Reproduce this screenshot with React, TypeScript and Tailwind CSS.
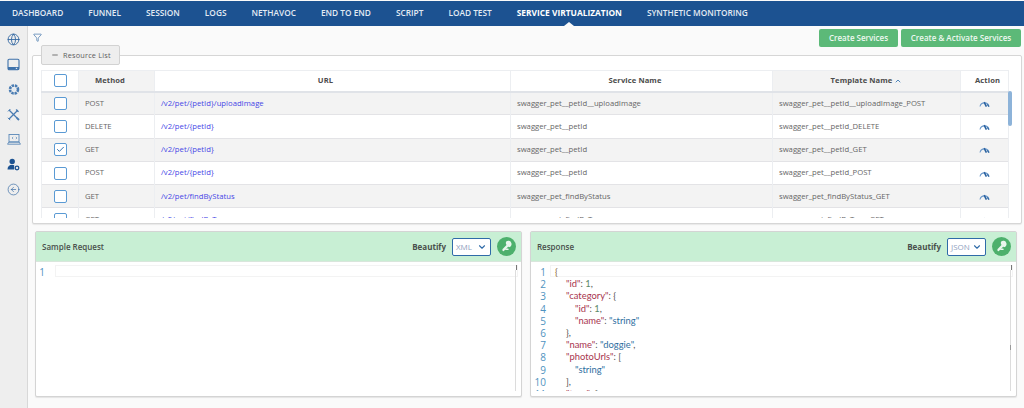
import React from "react";
import { ChevronDown, ChevronUp, Filter, Globe, CircleArrowLeft, Minus, Check } from "lucide-react";

const F = "[font-family:'Open_Sans',sans-serif]";
const nav = ["DASHBOARD", "FUNNEL", "SESSION", "LOGS", "NETHAVOC", "END TO END", "SCRIPT", "LOAD TEST"];
const rows = [
  ["POST", "/v2/pet/{petId}/uploadImage", "swagger_pet__petId__uploadImage", "swagger_pet__petId__uploadImage_POST"],
  ["DELETE", "/v2/pet/{petId}", "swagger_pet__petId", "swagger_pet__petId_DELETE"],
  ["GET", "/v2/pet/{petId}", "swagger_pet__petId", "swagger_pet__petId_GET"],
  ["POST", "/v2/pet/{petId}", "swagger_pet__petId", "swagger_pet__petId_POST"],
  ["GET", "/v2/pet/findByStatus", "swagger_pet_findByStatus", "swagger_pet_findByStatus_GET"],
  ["GET", "/v2/pet/findByTags", "swagger_pet_findByTags", "swagger_pet_findByTags_GET"],
];

function Box({ checked }: { checked?: boolean }) {
  return (
    <span className="flex h-[13px] w-[13px] items-center justify-center rounded-[2px] border border-[#5a9ad4] bg-white">
      {checked && <Check size={9} strokeWidth={2.6} className="text-[#2f6fae]" />}
    </span>
  );
}

function Gauge() {
  return (
    <svg width="11" height="7" viewBox="0 0 11 7" fill="none">
      <path d="M1 6.5A4.6 4.6 0 0 1 10 6.5" stroke="#6f9bcb" strokeWidth="1.1" />
      <path d="M5.2 2.2L7.4 6.6" stroke="#2a62a0" strokeWidth="1.6" />
      <path d="M8.2 4.4L10 6.6" stroke="#2a62a0" strokeWidth="1.2" />
    </svg>
  );
}

function Drive() {
  return (
    <svg width="13" height="13" viewBox="0 0 13 13" fill="none">
      <rect x="1" y="1.2" width="11" height="10.6" rx="1.2" stroke="#3f72aa" strokeWidth="1.1" />
      <rect x="1" y="9" width="11" height="2.8" fill="#3f72aa" />
      <rect x="8.8" y="9.8" width="1.4" height="1.1" fill="#e6eef6" />
    </svg>
  );
}

function Tools() {
  return (
    <svg width="13" height="13" viewBox="0 0 13 13" fill="none" stroke="#4a7cb2">
      <path d="M2 2L11 11" strokeWidth="1.2" />
      <path d="M11 2L2 11" strokeWidth="1.2" />
      <path d="M1 3.4L3.4 1" strokeWidth="1" />
      <path d="M9.4 1.2A2 2 0 0 0 11.8 3.6" strokeWidth="1" />
      <path d="M0.9 9.8L3.2 12.1" strokeWidth="1" />
      <path d="M9.8 9.8L12 12" strokeWidth="1.8" />
    </svg>
  );
}

function LaptopIcon() {
  return (
    <svg width="14" height="13" viewBox="0 0 14 13" fill="none" stroke="#5a88b8" strokeWidth="0.9">
      <rect x="2" y="1.5" width="10" height="7.5" />
      <path d="M0.5 11.2H13.5L12 9H2Z" />
      <path d="M5 5L6.2 4M5 5L6.2 6M8.8 4L10 5L8.8 6" strokeWidth="0.7" />
    </svg>
  );
}

function UserGear() {
  return (
    <svg width="13" height="13" viewBox="0 0 13 13" fill="#1c5291">
      <circle cx="5.2" cy="3.4" r="2.7" />
      <path d="M0.5 11.5C0.5 8.6 2.4 6.8 5.2 6.8C6 6.8 6.6 7 7.2 7.2V11.5Z" />
      <circle cx="10" cy="10" r="1.8" fill="none" stroke="#1c5291" strokeWidth="1.3" />
    </svg>
  );
}

function Aperture() {
  return (
    <svg width="12" height="13" viewBox="0 0 12 12">
      <circle cx="6" cy="6" r="4" fill="none" stroke="#4a7cb2" strokeWidth="2.6" strokeDasharray="2.4 0.8" />
      <circle cx="6" cy="6" r="1.6" fill="#dfe8f1" />
    </svg>
  );
}

function KeyIcon() {
  return (
    <svg width="13" height="13" viewBox="0 0 13 13" fill="#e9f6ed">
      <path d="M6.2 1.5A3.3 3.3 0 1 1 9 7.3L8.2 6.6L7 5.4L6.3 4.6A3.3 3.3 0 0 1 6.2 1.5Z" />
      <path d="M7 4.6L8.6 6.2L3.6 11.2L2.6 11L2.4 9.2Z" />
      <rect x="5.2" y="8.4" width="3.4" height="1.7" rx="0.7" />
    </svg>
  );
}

function Panel({ title, format, children }: { title: string; format: string; children?: React.ReactNode }) {
  return (
    <section className="flex h-[166px] w-[487px] flex-col rounded-[2px] border border-[#d4d4d4] bg-white shadow-[0_1px_1px_#e4e4e4]">
      <header className="flex h-[30px] shrink-0 items-center border-b border-[#d9e6dc] bg-[#c8efd4] pl-[6px] pr-[5px]">
        <span className="text-[8px] font-semibold text-[#4a4f4c]">{title}</span>
        <span className="ml-auto text-[8px] font-bold text-[#4a4f4c]">Beautify</span>
        <span className="ml-[6px] flex h-[18px] w-[39px] shrink-0 items-center justify-between rounded-[2px] border border-[#2f6ba8] bg-white px-[3px] text-[8px] text-[#8f9fc0]">
          {format}
          <ChevronDown size={10} strokeWidth={2.6} className="text-[#2f6ba8]" />
        </span>
        <span className="ml-[6px] flex h-[19px] w-[19px] shrink-0 items-center justify-center rounded-full bg-[#4db06c]">
          <KeyIcon />
        </span>
      </header>
      <div className="relative min-h-0 flex-1">
        <div className="absolute left-[19px] right-[3px] top-[3px] h-[12px] border border-[#f3f3f3]" />
        <div className="absolute bottom-[5px] right-[5px] top-[8px] w-px bg-[#dcdcdc]" />
        <div className="absolute right-[4px] top-[3px] h-[5px] w-px bg-[#777]" />
        {children && <div className="absolute right-[5px] top-[83px] h-[5px] w-px bg-[#999]" />}
        <div className="relative mb-[5px] flex h-[129px] overflow-hidden">
          <div className="w-[15px] shrink-0 pt-[4px] text-right text-[10px] leading-[12.2px] text-[#4f93c0]">
            {children ? [1, 2, 3, 4, 5, 6, 7, 8, 9, 10, 11].map((n) => <div key={n}>{n}</div>) : <div className="pr-[6px]">1</div>}
          </div>
          <div className="ml-[9px] min-w-0 flex-1 pt-[4px] text-[9.4px] leading-[12.2px] [font-family:Lato,sans-serif]">{children}</div>
        </div>
      </div>
    </section>
  );
}

const K = ({ c }: { c: string }) => <span className="text-[#a8344e]">{c}</span>;
const S = ({ c }: { c: string }) => <span className="text-[#2f6f9f]">{c}</span>;
const N = ({ c }: { c: string }) => <span className="text-[#5b8a6a]">{c}</span>;
const P = ({ c }: { c: string }) => <span className="text-[#555]">{c}</span>;

function Code() {
  return (
    <>
      <div><span className="text-[#8a6a3a]">{"{"}</span></div>
      <div className="pl-[11px]"><K c='"id"' /><P c=": " /><N c="1" /><P c="," /></div>
      <div className="pl-[11px]"><K c='"category"' /><P c=": {" /></div>
      <div className="pl-[20px]"><K c='"id"' /><P c=": " /><N c="1" /><P c="," /></div>
      <div className="pl-[20px]"><K c='"name"' /><P c=": " /><S c='"string"' /></div>
      <div className="pl-[11px]"><P c="}," /></div>
      <div className="pl-[11px]"><K c='"name"' /><P c=": " /><S c='"doggie"' /><P c="," /></div>
      <div className="pl-[11px]"><K c='"photoUrls"' /><P c=": [" /></div>
      <div className="pl-[20px]"><S c='"string"' /></div>
      <div className="pl-[11px]"><P c="]," /></div>
      <div className="pl-[11px]"><K c='"tags"' /><P c=": [" /></div>
    </>
  );
}

export default function App() {
  return (
    <div className={`${F} flex h-[408px] w-[1024px] flex-col overflow-hidden bg-[#fafafa] pt-[1px]`}>
      <nav className="flex h-[25px] shrink-0 items-center gap-[25px] bg-[#1c5291] pl-[12px] text-[8.3px] font-semibold text-[#e3ebf4]">
        {nav.map((n) => (
          <span key={n} className="shrink-0">{n}</span>
        ))}
        <span className="relative flex h-full shrink-0 items-center justify-center text-[8.4px] font-bold text-white">
          SERVICE VIRTUALIZATION
          <span className="absolute bottom-0 left-1/2 h-0 w-0 -translate-x-1/2 border-x-[5px] border-b-[4px] border-x-transparent border-b-[#fafafa]" />
        </span>
        <span className="shrink-0">SYNTHETIC MONITORING</span>
      </nav>
      <div className="flex min-h-0 flex-1">
        <aside className="flex w-[28px] shrink-0 flex-col items-center gap-[12px] border-r border-[#d8d8d8] bg-[#eeeeee] pt-[7px] text-[#2f65a0]">
          <Globe size={13} strokeWidth={1.6} />
          <Drive />
          <Aperture />
          <Tools />
          <LaptopIcon />
          <UserGear />
          <CircleArrowLeft size={13} strokeWidth={1.2} />
        </aside>
        <main className="relative min-w-0 flex-1">
          <div className="flex h-[21px] items-center pl-[5px] pr-[3px] pt-[2px]">
            <Filter size={9} strokeWidth={1.8} className="text-[#3b70a8]" />
            <button className="ml-auto flex h-[18px] w-[79px] items-center justify-center rounded-[2px] bg-[#5cb978] text-[8px] font-semibold text-[#eef8f1]">Create Services</button>
            <button className="ml-[3px] flex h-[18px] w-[120px] items-center justify-center rounded-[2px] bg-[#5cb978] text-[8px] font-semibold text-[#eef8f1]">Create &amp; Activate Services</button>
          </div>
          <div className="relative ml-[4px] mr-[2px] mt-[8px] h-[169px] rounded-[2px] border border-[#d6d6d6] bg-white pl-[8px] pt-[14px] shadow-[0_1px_1px_#e8e8e8]">
            <div className="absolute left-[8px] top-[-11px] flex h-[20px] w-[79px] items-center gap-[4px] rounded-[2px] border border-[#d2d2d2] bg-[#eeeeee] pl-[9px] text-[7.3px] tracking-[0.2px] text-[#5b5b5b]">
              <Minus size={8} strokeWidth={2.5} />
              Resource List
            </div>
            <div className="relative h-[148px] w-[975px] overflow-hidden">
              <table className="w-[967px] table-fixed border-collapse text-[7.7px] text-[#666]">
                <colgroup>
                  <col className="w-[37px]" /><col className="w-[76px]" /><col className="w-[356px]" /><col className="w-[262px]" /><col className="w-[188px]" /><col className="w-[48px]" />
                </colgroup>
                <thead>
                  <tr className="h-[21px] border-b-2 border-[#e0e3e8] text-[7.6px] tracking-[0.1px] text-[#4c4c4c]">
                    <th className="border-x border-t border-[#eceef1] bg-white p-0"><span className="flex justify-center"><Box /></span></th>
                    <th className="border-x border-t border-[#eceef1] bg-[#f3f3f3] p-0 pr-[13px] text-center font-bold">Method</th>
                    <th className="border-x border-t border-[#eceef1] bg-white p-0 pr-[14px] text-center font-bold">URL</th>
                    <th className="border-x border-t border-[#eceef1] bg-white p-0 pr-[13px] text-center font-bold">Service Name</th>
                    <th className="border-x border-t border-[#eceef1] bg-[#f3f3f3] p-0 text-center font-bold">
                      <span className="inline-flex items-center gap-[2px]">Template Name <ChevronUp size={8} strokeWidth={3} className="text-[#4f86bd]" /></span>
                    </th>
                    <th className="border-x border-t border-[#eceef1] bg-white p-0 pl-[6px] text-center font-bold">Action</th>
                  </tr>
                </thead>
                <tbody>
                  {rows.map((r, i) => (
                    <tr key={i} className={`h-[23.3px] border-b border-[#e3e3e6] ${i % 2 === 0 ? "bg-[#f3f3f3]" : "bg-white"}`}>
                      <td className="border-x border-[#eceef1] p-0"><span className="flex justify-center"><Box checked={i === 2} /></span></td>
                      <td className="border-x border-[#eceef1] p-0 pl-[6px]">{r[0]}</td>
                      <td className="border-x border-[#eceef1] p-0 pl-[6px] text-[#4646e6]">{r[1]}</td>
                      <td className="border-x border-[#eceef1] p-0 pl-[6px]">{r[2]}</td>
                      <td className="border-x border-[#eceef1] p-0 pl-[6px]">{r[3]}</td>
                      <td className="border-x border-[#eceef1] p-0"><span className="flex justify-center"><Gauge /></span></td>
                    </tr>
                  ))}
                </tbody>
              </table>
              <span className="absolute left-[967px] top-[21px] h-[35px] w-[4px] rounded-full bg-[#8db3d9]" />
            </div>
          </div>
          <div className="ml-[7px] mt-[7px] flex gap-[8px]">
            <Panel title="Sample Request" format="XML" />
            <Panel title="Response" format="JSON"><Code /></Panel>
          </div>
        </main>
      </div>
    </div>
  );
}
